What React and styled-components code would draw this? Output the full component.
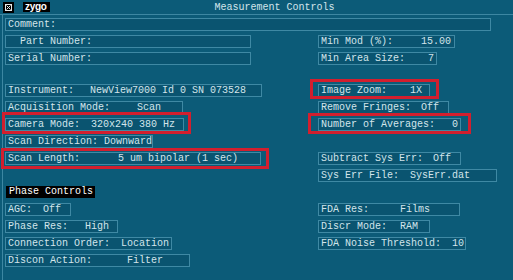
import React from 'react';
import styled, { createGlobalStyle } from 'styled-components';

const GlobalStyle = createGlobalStyle`
  html, body {
    margin: 0;
    padding: 0;
    background: #0c5b78;
  }
  body {
    font-family: "Liberation Mono", "DejaVu Sans Mono", monospace;
    font-size: 10px;
    color: #d3e5eb;
  }
`;

const Window = styled.div`
  width: 513px;
  height: 280px;
  overflow: hidden;
  background: #0c5b78;
`;

const TitleBar = styled.div`
  height: 14px;
  display: flex;
  align-items: center;
  padding-left: 3px;
  border-bottom: 1px solid #3d87a2;
`;

const Logo = styled.div`
  margin-left: 9px;
  height: 10px;
  line-height: 10px;
  padding: 0 3px 0 2px;
  background: #000;
  color: #fff;
  font-family: "Liberation Sans", Arial, sans-serif;
  font-weight: bold;
  font-size: 10px;
  letter-spacing: -0.3px;
`;

const Title = styled.div`
  margin-left: 165px;
  white-space: pre;
`;

const Body = styled.div`
  margin-left: 2px;
  height: 265px;
  padding: 3px 0 0 2px;
  border-left: 1px solid #3d87a2;
`;

const Field = styled.div`
  box-sizing: border-box;
  width: ${(p) => p.$w}px;
  height: 13px;
  display: flex;
  align-items: center;
  padding: 0 2px;
  border: 1px solid #3f89a4;
  background: #0a5470;
  white-space: pre;
  line-height: 11px;
`;

const Label = styled.span`
  flex: none;
  width: ${(p) => (p.$w ? `${p.$w}px` : 'auto')};
`;

const Grid = styled.div`
  display: grid;
  grid-template-columns: 313px 1fr;
  grid-auto-rows: 17px;
  align-items: start;
  justify-items: start;
  margin-top: ${(p) => p.$top}px;
`;

const Highlight = styled.div`
  position: relative;
  width: max-content;

  &::after {
    content: '';
    position: absolute;
    top: -${(p) => p.$t}px;
    right: -${(p) => p.$r}px;
    bottom: -${(p) => p.$b}px;
    left: -${(p) => p.$l}px;
    border: 3px solid #d21f2e;
    pointer-events: none;
  }
`;

const SectionHead = styled.div`
  width: 89px;
  height: 12px;
  margin-left: 1px;
  padding-left: 3px;
  box-sizing: border-box;
  background: #000;
  color: #fff;
  line-height: 12px;
  white-space: pre;
`;

const CloseBox = () => (
  <svg width="11" height="11" viewBox="0 0 11 11">
    <rect width="11" height="11" fill="#000" />
    <rect x="2.5" y="2.5" width="6" height="6" fill="none" stroke="#e8e8e8" />
    <path d="M3.5 3.5 L7.5 7.5 M7.5 3.5 L3.5 7.5" stroke="#e8e8e8" strokeWidth="1" />
  </svg>
);

const Item = ({ w, lw, label, value }) => (
  <Field $w={w}>
    <Label $w={lw}>{label}</Label>
    {value}
  </Field>
);

const App = () => (
  <Window>
    <GlobalStyle />
    <TitleBar>
      <CloseBox />
      <Logo>zygo</Logo>
      <Title>Measurement Controls</Title>
    </TitleBar>
    <Body>
      <Item w={486} label="Comment:" />

      <Grid $top={4}>
        <Item w={246} label="  Part Number:" />
        <Item w={137} lw={100} label="Min Mod (%):" value="15.00" />
        <Item w={246} label="Serial Number:" />
        <Item w={119} lw={107} label="Min Area Size:" value="7" />
      </Grid>

      <Grid $top={15}>
        <Item w={257} lw={82} label="Instrument:" value="NewView7000 Id 0 SN 073528" />
        <Highlight $t={5} $r={9} $b={2} $l={8}>
          <Item w={112} lw={89} label="Image Zoom:" value="1X" />
        </Highlight>

        <Item w={178} lw={129} label="Acquisition Mode:" value="Scan" />
        <Item w={131} lw={100} label="Remove Fringes:" value="Off" />

        <Highlight $t={6} $r={7} $b={3} $l={3}>
          <Item w={179} lw={83} label="Camera Mode:" value="320x240 380 Hz" />
        </Highlight>
        <Highlight $t={5} $r={10} $b={3} $l={10}>
          <Item w={143} lw={131} label="Number of Averages:" value="0" />
        </Highlight>

        <Item w={148} label="Scan Direction: Downward" />
        <div />

        <Highlight $t={4} $r={8} $b={4} $l={4}>
          <Item w={256} lw={110} label="Scan Length:" value="5 um bipolar (1 sec)" />
        </Highlight>
        <Item w={143} lw={112} label="Subtract Sys Err:" value="Off" />

        <div />
        <Item w={179} lw={89} label="Sys Err File:" value="SysErr.dat" />

        <SectionHead>Phase Controls</SectionHead>
        <div />

        <Item w={66} lw={35} label="AGC:" value="Off" />
        <Item w={142} lw={79} label="FDA Res:" value="Films" />

        <Item w={113} lw={77} label="Phase Res:" value="High" />
        <Item w={112} lw={79} label="Discr Mode:" value="RAM" />

        <Item w={167} lw={113} label="Connection Order:" value="Location" />
        <Item w={148} lw={131} label="FDA Noise Threshold:" value="10" />

        <Item w={185} lw={119} label="Discon Action:" value="Filter" />
        <div />
      </Grid>
    </Body>
  </Window>
);

export default App;
